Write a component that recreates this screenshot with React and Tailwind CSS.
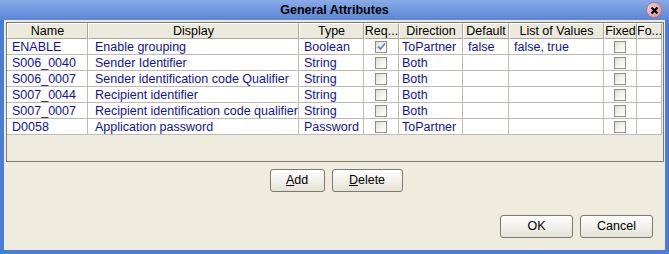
import React from 'react'

const COLS = [
  { label: 'Name', w: 'w-[81px]' },
  { label: 'Display', w: 'w-[211px]' },
  { label: 'Type', w: 'w-[65px]' },
  { label: 'Req...', w: 'w-[35px]' },
  { label: 'Direction', w: 'w-[64px]' },
  { label: 'Default', w: 'w-[46px]' },
  { label: 'List of Values', w: 'w-[95px]' },
  { label: 'Fixed', w: 'w-[33px]' },
  { label: 'Fo...', w: 'w-[25px]' },
]

const ROWS = [
  { name: 'ENABLE', display: 'Enable grouping', type: 'Boolean', req: true, dir: 'ToPartner', def: 'false', lov: 'false, true' },
  { name: 'S006_0040', display: 'Sender Identifier', type: 'String', req: false, dir: 'Both', def: '', lov: '' },
  { name: 'S006_0007', display: 'Sender identification code Qualifier', type: 'String', req: false, dir: 'Both', def: '', lov: '' },
  { name: 'S007_0044', display: 'Recipient identifier', type: 'String', req: false, dir: 'Both', def: '', lov: '' },
  { name: 'S007_0007', display: 'Recipient identification code qualifier', type: 'String', req: false, dir: 'Both', def: '', lov: '' },
  { name: 'D0058', display: 'Application password', type: 'Password', req: false, dir: 'ToPartner', def: '', lov: '' },
]

function Check({ checked }) {
  return (
    <div className="w-[12px] h-[12px] border border-[#8f8f88] bg-gradient-to-br from-[#dcdcd4] via-[#f4f4ee] to-white flex items-center justify-center">
      {checked && (
        <svg width="9" height="9" viewBox="0 0 9 9">
          <path d="M1 4.5 L3.5 7 L8 1.5" stroke="#6a86c0" strokeWidth="1.8" fill="none" />
        </svg>
      )}
    </div>
  )
}

function Btn({ children, w }) {
  return (
    <button className={`${w} h-[23px] rounded-[3px] border border-[#7a7a70] bg-gradient-to-b from-white to-[#e4e2d6] text-[12.5px] text-black flex items-center justify-center`}>
      {children}
    </button>
  )
}

function Cell({ w, children, center }) {
  return (
    <div className={`${w} h-full border-r border-[#bdbcb4] flex items-center ${center ? 'justify-center' : 'pl-[5px] pt-[1px]'} whitespace-nowrap overflow-hidden`}>
      {children}
    </div>
  )
}

export default function App() {
  return (
    <div className="w-[669px] h-[254px] bg-[#4d7cd3] flex flex-col font-['Liberation_Sans',Arial,sans-serif] overflow-hidden">
      <div className="h-[20px] relative flex items-center justify-center bg-gradient-to-b from-[#8aace8] via-[#7197dc] to-[#5c87d6]">
        <span className="text-[12.5px] font-bold text-black">General Attributes</span>
        <div className="absolute right-[7px] top-[2px] w-[16px] h-[16px] rounded-full bg-gradient-to-br from-[#f6d0d6] to-[#d9909c] border border-[#b07884] flex items-center justify-center">
          <svg width="9" height="9" viewBox="0 0 9 9">
            <path d="M1.5 1.5 L7.5 7.5 M7.5 1.5 L1.5 7.5" stroke="#000" strokeWidth="2.2" />
          </svg>
        </div>
      </div>
      <div className="flex-1 mx-[4px] mb-[4px] bg-[#efebdf] pt-[2px] px-[2px] flex flex-col">
        <div className="w-[658px] h-[140px] border border-[#7d7b70] bg-[#efebdf] text-[12.5px] leading-none">
          <div className="flex h-[16px] bg-[#ebe9db]">
            {COLS.map((c) => (
              <div key={c.label} className={`${c.w} h-full border-t border-l border-white border-r border-r-[#a9a79a] border-b border-b-[#a9a79a] flex items-center justify-center pt-[1px] text-black whitespace-nowrap overflow-hidden`}>
                {c.label}
              </div>
            ))}
          </div>
          {ROWS.map((r) => (
            <div key={r.name} className="flex h-[16px] bg-white border-b border-[#bdbcb4] w-[655px] text-[#12129a]">
              <Cell w={COLS[0].w}>{r.name}</Cell>
              <Cell w={COLS[1].w}><span className="pl-[2px]">{r.display}</span></Cell>
              <Cell w={COLS[2].w}>{r.type}</Cell>
              <Cell w={COLS[3].w} center><Check checked={r.req} /></Cell>
              <Cell w={COLS[4].w}><span className="-ml-[2px]">{r.dir}</span></Cell>
              <Cell w={COLS[5].w}>{r.def}</Cell>
              <Cell w={COLS[6].w}>{r.lov}</Cell>
              <Cell w={COLS[7].w} center><Check /></Cell>
              <Cell w={COLS[8].w} />
            </div>
          ))}
        </div>
        <div className="flex justify-center gap-[7px] mt-[7px] pl-[3px]">
          <Btn w="w-[55px]"><span><u>A</u>dd</span></Btn>
          <Btn w="w-[71px]"><span><u>D</u>elete</span></Btn>
        </div>
        <div className="flex justify-end gap-[7px] mt-[23px] pr-[10px]">
          <Btn w="w-[73px]">OK</Btn>
          <Btn w="w-[73px]">Cancel</Btn>
        </div>
      </div>
    </div>
  )
}
